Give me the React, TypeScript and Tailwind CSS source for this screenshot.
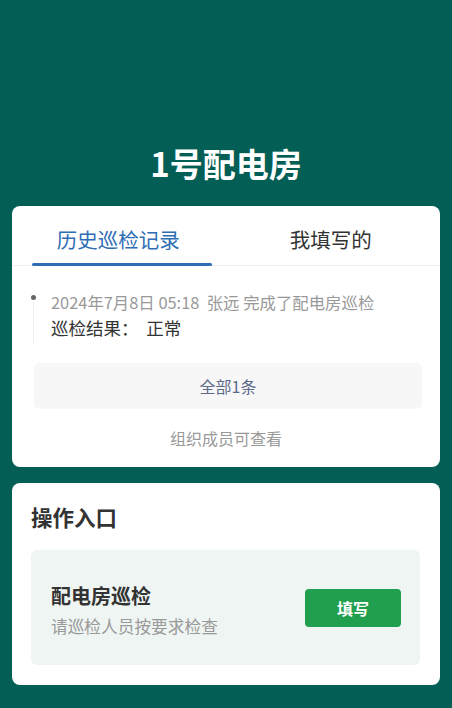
import React from "react";

export default function App() {
  const font = { fontFamily: '"Noto Sans CJK SC", "Noto Sans", sans-serif' };
  return (
    <div
      className="min-h-[708px] w-full bg-[#035e55] px-3 pb-6"
      style={font}
    >
      <div className="pt-[142px] mb-[21px] h-[185px] text-center text-[33px] font-bold leading-[42px] text-white">
        1号配电房
      </div>

      <div className="rounded-lg bg-white">
        <div className="flex h-[60px] border-b border-[#eeeeee]">
          <div className="relative flex flex-1 justify-center pt-[19px]">
            <span className="text-[20.5px] leading-[28px] text-[#2f6db5]">历史巡检记录</span>
            <div className="absolute bottom-[-1px] left-[20px] h-[3px] w-[180px] rounded-full bg-[#2f6db5]" />
          </div>
          <div className="flex flex-1 justify-center pt-[19px] pr-[3px]">
            <span className="text-[20.5px] leading-[28px] text-[#333333]">我填写的</span>
          </div>
        </div>

        <div className="relative ml-[21px] mt-[24px] flex">
          <div className="flex w-[18px] flex-col items-start">
            <div className="mt-[5px] h-[5px] w-[5px] -translate-x-[2px] rounded-full bg-[#666666]" />
            <div className="mt-[2px] h-[41px] w-px bg-[#eeeeee]" />
          </div>
          <div className="flex flex-col">
            <div className="text-[16.4px] leading-[25px] text-[#999999]">
              2024年7月8日 05:18&nbsp;&nbsp;张远 完成了配电房巡检
            </div>
            <div className="text-[17.5px] leading-[25px] text-[#333333]">
              巡检结果：&nbsp;&nbsp;正常
            </div>
          </div>
        </div>

        <div className="ml-[22px] mr-[18px] mt-[20px] flex h-[46px] items-center justify-center rounded-md bg-[#f7f7f8] text-[16px] text-[#5b6a89]">
          全部1条
        </div>

        <div className="pb-[18px] pt-[18px] text-center text-[16px] leading-[22px] text-[#999999]">
          组织成员可查看
        </div>
      </div>

      <div className="mt-[16px] rounded-lg bg-white pb-[20px] pl-[19px] pr-[20px] pt-[20px]">
        <div className="text-[21.5px] font-bold leading-[28px] text-[#333333]">操作入口</div>
        <div className="mt-[19px] flex h-[115px] items-center justify-between rounded-md bg-[#eff5f2] pl-[20px] pr-[19px]">
          <div className="flex flex-col pt-[4px]">
            <div className="text-[20px] font-bold leading-[28px] text-[#333333]">配电房巡检</div>
            <div className="mt-[4px] text-[16.7px] leading-[24px] text-[#999999]">请巡检人员按要求检查</div>
          </div>
          <button className="h-[38px] w-[96px] rounded bg-[#20a04f] text-[16px] font-bold text-white">
            填写
          </button>
        </div>
      </div>
    </div>
  );
}
